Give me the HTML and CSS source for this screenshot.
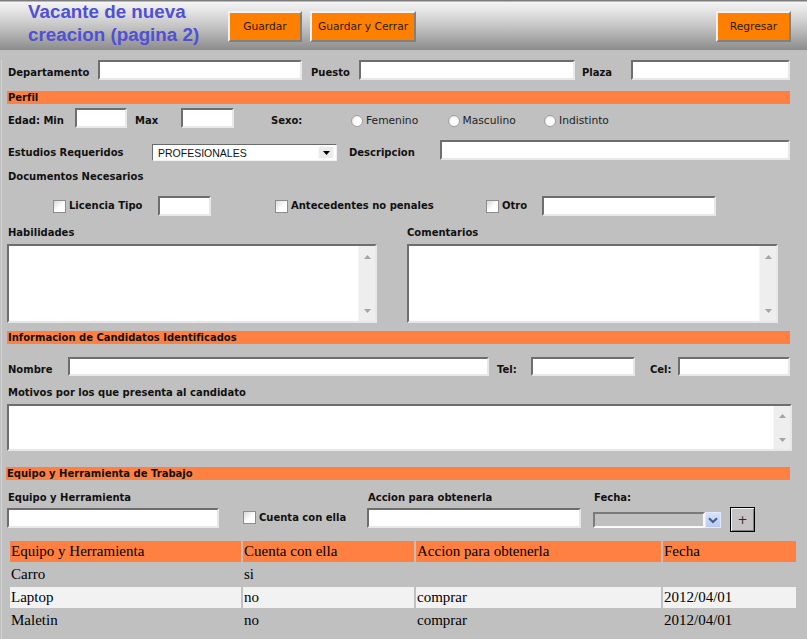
FILE: index.html
```html
<!DOCTYPE html>
<html lang="es">
<head>
<meta charset="utf-8">
<title>Vacante de nueva creacion (pagina 2)</title>
<link rel="stylesheet" href="styles.css">
</head>
<body>
<header class="topbar">
  <h1 class="title">Vacante de nueva<br>creacion (pagina 2)</h1>
  <button class="btn btn-save" type="button">Guardar</button>
  <button class="btn btn-save-close" type="button">Guardar y Cerrar</button>
  <button class="btn btn-back" type="button">Regresar</button>
</header>
<main class="form">
  <div class="row row-top">
    <label class="lbl low lbl-dept">Departamento</label>
    <input class="txt txt-dept" type="text">
    <label class="lbl low lbl-puesto">Puesto</label>
    <input class="txt txt-puesto" type="text">
    <label class="lbl low lbl-plaza">Plaza</label>
    <input class="txt txt-plaza" type="text">
  </div>

  <div class="bar bar-perfil">Perfil</div>

  <div class="row row-edad">
    <label class="lbl low lbl-min">Edad: Min</label>
    <input class="txt txt-min" type="text">
    <label class="lbl low lbl-max">Max</label>
    <input class="txt txt-max" type="text">
    <label class="lbl low lbl-sexo">Sexo:</label>
    <span class="opt"><span class="radio"></span>Femenino</span>
    <span class="opt"><span class="radio"></span>Masculino</span>
    <span class="opt"><span class="radio"></span>Indistinto</span>
  </div>

  <div class="row row-estudios">
    <label class="lbl low lbl-estudios">Estudios Requeridos</label>
    <div class="combo">
      <span class="combo-text">PROFESIONALES</span>
      <span class="combo-btn"><svg width="7" height="4" viewBox="0 0 7 4"><path d="M0 0H7L3.5 4Z" fill="#000"/></svg></span>
    </div>
    <label class="lbl low lbl-desc">Descripcion</label>
    <input class="txt txt-desc" type="text">
  </div>

  <div class="lbl line lbl-docs">Documentos Necesarios</div>

  <div class="row row-docs">
    <span class="chk-item chk-lic"><span class="check"></span><span class="lbl">Licencia Tipo</span></span>
    <input class="txt txt-lic" type="text">
    <span class="chk-item chk-ant"><span class="check"></span><span class="lbl">Antecedentes no penales</span></span>
    <span class="chk-item chk-otro"><span class="check"></span><span class="lbl">Otro</span></span>
    <input class="txt txt-otro" type="text">
  </div>

  <div class="areas">
    <div class="area-col">
      <div class="lbl line area-lbl">Habilidades</div>
      <div class="area area-tall">
        <textarea class="area-input"></textarea>
        <div class="vscroll">
          <svg width="7" height="4" viewBox="0 0 7 4"><path d="M0 4L3.5 0L7 4Z" fill="#a4a4a4"/></svg>
          <svg width="7" height="4" viewBox="0 0 7 4"><path d="M0 0H7L3.5 4Z" fill="#a4a4a4"/></svg>
        </div>
      </div>
    </div>
    <div class="area-col area-col-right">
      <div class="lbl line area-lbl">Comentarios</div>
      <div class="area area-tall">
        <textarea class="area-input"></textarea>
        <div class="vscroll">
          <svg width="7" height="4" viewBox="0 0 7 4"><path d="M0 4L3.5 0L7 4Z" fill="#a4a4a4"/></svg>
          <svg width="7" height="4" viewBox="0 0 7 4"><path d="M0 0H7L3.5 4Z" fill="#a4a4a4"/></svg>
        </div>
      </div>
    </div>
  </div>

  <div class="bar bar-cand">Informacion de Candidatos Identificados</div>

  <div class="row row-nombre">
    <label class="lbl low lbl-nombre">Nombre</label>
    <input class="txt txt-nombre" type="text">
    <label class="lbl low lbl-tel">Tel:</label>
    <input class="txt txt-tel" type="text">
    <label class="lbl low lbl-cel">Cel:</label>
    <input class="txt txt-cel" type="text">
  </div>

  <div class="lbl line lbl-motivos">Motivos por los que presenta al candidato</div>
  <div class="area area-wide">
    <textarea class="area-input"></textarea>
    <div class="vscroll vscroll-short">
      <svg width="7" height="4" viewBox="0 0 7 4"><path d="M0 4L3.5 0L7 4Z" fill="#a4a4a4"/></svg>
      <svg width="7" height="4" viewBox="0 0 7 4"><path d="M0 0H7L3.5 4Z" fill="#a4a4a4"/></svg>
    </div>
  </div>

  <div class="bar bar-equipo">Equipo y Herramienta de Trabajo</div>

  <div class="eq-labels">
    <span class="lbl eq-l1">Equipo y Herramienta</span>
    <span class="lbl eq-l2">Accion para obtenerla</span>
    <span class="lbl">Fecha:</span>
  </div>
  <div class="eq-controls">
    <input class="txt txt-equipo" type="text">
    <span class="chk-item chk-cuenta"><span class="check"></span><span class="lbl">Cuenta con ella</span></span>
    <input class="txt txt-accion" type="text">
    <div class="date-sel">
      <span class="date-body"></span>
      <span class="date-btn"><svg width="10" height="7" viewBox="0 0 10 7"><path d="M1 1.2L5 5L9 1.2" stroke="#4d5f86" stroke-width="2.2" fill="none"/></svg></span>
    </div>
    <button class="plus" type="button">+</button>
  </div>

  <table class="grid">
    <colgroup><col class="c1"><col class="c2"><col class="c3"><col class="c4"></colgroup>
    <thead>
      <tr><th>Equipo y Herramienta</th><th>Cuenta con ella</th><th>Accion para obtenerla</th><th>Fecha</th></tr>
    </thead>
    <tbody>
      <tr><td>Carro</td><td>si</td><td></td><td></td></tr>
      <tr class="alt"><td>Laptop</td><td>no</td><td>comprar</td><td>2012/04/01</td></tr>
      <tr><td>Maletin</td><td>no</td><td>comprar</td><td>2012/04/01</td></tr>
    </tbody>
  </table>
</main>
</body>
</html>
```

FILE: styles.css
```css
* { box-sizing: border-box; }

html, body {
  margin: 0;
  background: #c0c0c0;
}

body {
  width: 807px;
  height: 639px;
  overflow: hidden;
  font-family: "DejaVu Sans", Verdana, sans-serif;
  color: #111;
}

/* ---------- header ---------- */
.topbar {
  height: 50px;
  display: flex;
  align-items: flex-start;
  padding-left: 28px;
  background: linear-gradient(#7c7c7c 0, #7c7c7c 1px, #f4f4f4 2px, #e6e6e6 20%, #c2c2c2 55%, #8c8c8c 100%);
}

.title {
  margin: 0;
  width: 200px;
  font: bold 18.8px/23px "Liberation Sans", Arial, sans-serif;
  color: #5050d4;
}

.btn {
  height: 31px;
  margin-top: 11px;
  padding: 0;
  background: #ff8000;
  border: 2px solid;
  border-color: #f2f2f2 #808080 #808080 #f2f2f2;
  font: 10.7px "DejaVu Sans", Verdana, sans-serif;
  color: #2a1a0a;
}

.btn-save { width: 74px; }
.btn-save-close { width: 106px; margin-left: 8px; }
.btn-back { width: 75px; margin-left: auto; margin-right: 16px; }

/* ---------- generic form parts ---------- */
.form {
  border-left: 1px solid #d2d2d2;
  margin-left: 1px;
  height: 589px;
}

.lbl {
  font: bold 10px/12px "DejaVu Sans", Verdana, sans-serif;
  color: #111;
  white-space: nowrap;
}

.low { padding-top: 6px; }

.line { padding-left: 6px; }

.row {
  display: flex;
  align-items: center;
  height: 20px;
  padding-left: 6px;
}

.txt {
  height: 20px;
  margin: 0;
  padding: 0 2px;
  background: #fff;
  border: 2px solid;
  border-color: #6e6e6e #e8e8e8 #e8e8e8 #6e6e6e;
  font: 11px "Liberation Sans", Arial, sans-serif;
  outline: none;
}

.bar {
  height: 13px;
  margin-left: 5px;
  width: 783px;
  padding-left: 1px;
  background: #ff8040;
  font: bold 10px/13px "DejaVu Sans", Verdana, sans-serif;
  color: #111;
}

/* row 1 */
.row-top { margin-top: 10px; }
.lbl-dept { width: 90px; }
.txt-dept { width: 204px; }
.lbl-puesto { width: 48px; margin-left: 9px; }
.txt-puesto { width: 216px; }
.lbl-plaza { width: 49px; margin-left: 7px; }
.txt-plaza { width: 159px; }

.bar-perfil { margin-top: 11px; }

/* edad row */
.row-edad { margin-top: 4px; }
.lbl-min { width: 67px; }
.txt-min { width: 52px; }
.lbl-max { width: 46px; margin-left: 8px; }
.txt-max { width: 53px; }
.lbl-sexo { width: 80px; margin-left: 37px; }

.opt {
  display: flex;
  align-items: center;
  width: 96.5px;
  padding-top: 6px;
  font: 10.7px/12px "DejaVu Sans", Verdana, sans-serif;
  color: #222;
}

.radio {
  width: 12px;
  height: 12px;
  margin-right: 3px;
  border-radius: 50%;
  border: 1px solid #a0a0a0;
  background: radial-gradient(circle at 65% 65%, #ffffff 45%, #d6d6d6 100%);
}

/* estudios row */
.row-estudios { margin-top: 12px; }
.lbl-estudios { width: 144px; }

.combo {
  align-self: flex-start;
  margin-top: 4px;
  width: 185px;
  height: 17px;
  display: flex;
  align-items: center;
  background: #fff;
  border: 1px solid;
  border-color: #6a6a6a #f0f0f0 #f0f0f0 #6a6a6a;
}

.combo-text {
  flex: 1;
  padding-left: 5px;
  font: 10.5px "Liberation Sans", Arial, sans-serif;
  color: #111;
}

.combo-btn {
  width: 16px;
  height: 13px;
  margin-right: 2px;
  display: flex;
  align-items: center;
  justify-content: center;
  background: #ececec;
  border: 1px solid #f8f8f8;
}

.lbl-desc { width: 91px; margin-left: 12px; }
.txt-desc { width: 350px; }

/* documentos */
.lbl-docs { margin-top: 11px; }

.row-docs { margin-top: 13px; padding-left: 51px; }

.chk-item {
  display: flex;
  align-items: center;
}

.check {
  width: 13px;
  height: 13px;
  margin-right: 3px;
  border: 1px solid #8c8c8c;
  background: linear-gradient(135deg, #d8d8d8 0%, #fff 55%);
}

.chk-lic { width: 105px; }
.txt-lic { width: 53px; }
.chk-ant { width: 211px; margin-left: 64px; }
.chk-otro { width: 56px; }
.txt-otro { width: 174px; }

/* text areas */
.areas {
  display: flex;
  margin-top: 11px;
  padding-left: 5px;
}

.area-col { width: 370px; }
.area-col-right { margin-left: 30px; width: 371px; }
.area-col-right .area-lbl { padding-left: 0; }
.area-lbl { padding-left: 1px; }

.area {
  display: flex;
  margin-top: 5px;
  background: #fff;
  border: 2px solid;
  border-color: #6e6e6e #e8e8e8 #e8e8e8 #6e6e6e;
}

.area-tall { height: 79px; }

.area-input {
  flex: 1;
  border: 0;
  margin: 0;
  padding: 0;
  resize: none;
  outline: none;
  background: #fff;
}

.vscroll {
  width: 17px;
  display: flex;
  flex-direction: column;
  align-items: center;
  justify-content: space-between;
  padding: 9px 0 8px;
  background: #eeeeee;
  border-left: 1px solid #f6f6f6;
}

.vscroll-short { padding: 8px 0 7px; }

.bar-cand { margin-top: 8px; }

/* nombre row */
.row-nombre { margin-top: 13px; height: 19px; }
.row-nombre .txt { height: 19px; }
.lbl-nombre { width: 60px; }
.txt-nombre { width: 421px; }
.lbl-tel { width: 34px; margin-left: 8px; }
.txt-tel { width: 104px; }
.lbl-cel { width: 28px; margin-left: 15px; }
.txt-cel { width: 112px; }

.lbl-motivos { margin-top: 11px; }

.area-wide {
  height: 47px;
  width: 785px;
  margin-left: 5px;
}

.bar-equipo { margin-top: 16px; margin-left: 4px; width: 784px; }

/* equipo */
.eq-labels {
  display: flex;
  margin-top: 12px;
  padding-left: 6px;
}

.eq-l1 { width: 360px; }
.eq-l2 { width: 226px; }

.eq-controls {
  display: flex;
  align-items: flex-start;
  height: 25px;
  margin-top: 3px;
  padding-left: 5px;
}

.txt-equipo { width: 212px; margin-top: 1px; }

.chk-cuenta { width: 124px; margin-left: 24px; margin-top: 4px; }

.txt-accion { width: 214px; margin-top: 1px; }

.date-sel {
  display: flex;
  width: 128px;
  height: 16px;
  margin-left: 12px;
  margin-top: 5px;
}

.date-body {
  flex: 1;
  border: 2px solid;
  border-color: #7a7a7a #fafafa #fafafa #7a7a7a;
  background: #c0c0c0;
}

.date-btn {
  width: 16px;
  display: flex;
  align-items: center;
  justify-content: center;
  background: linear-gradient(#d6e2fe, #b8cbf6);
  border: 1px solid #e2eafc;
}

.plus {
  width: 25px;
  height: 25px;
  margin-left: 9px;
  padding: 0;
  background: #c4c4c4;
  border: 1px solid #000;
  box-shadow: inset 1px 1px 0 #f4f4f4, inset -1px -1px 0 #808080;
  font: 12px "DejaVu Sans", Verdana, sans-serif;
  color: #3a2412;
}

/* table */
.grid {
  margin: 7px 0 0 6px;
  width: 790px;
  table-layout: fixed;
  border-spacing: 2px;
  font: 15px "Liberation Serif", "Times New Roman", serif;
  color: #000;
}

.grid .c1 { width: 231px; }
.grid .c2 { width: 171px; }
.grid .c3 { width: 245px; }
.grid .c4 { width: 133px; }

.grid th,
.grid td {
  height: 21px;
  padding: 0 1px;
  text-align: left;
  font-weight: normal;
  white-space: nowrap;
}

.grid th { background: #ff8040; }

.grid .alt td { background: #f2f2f2; }
```
